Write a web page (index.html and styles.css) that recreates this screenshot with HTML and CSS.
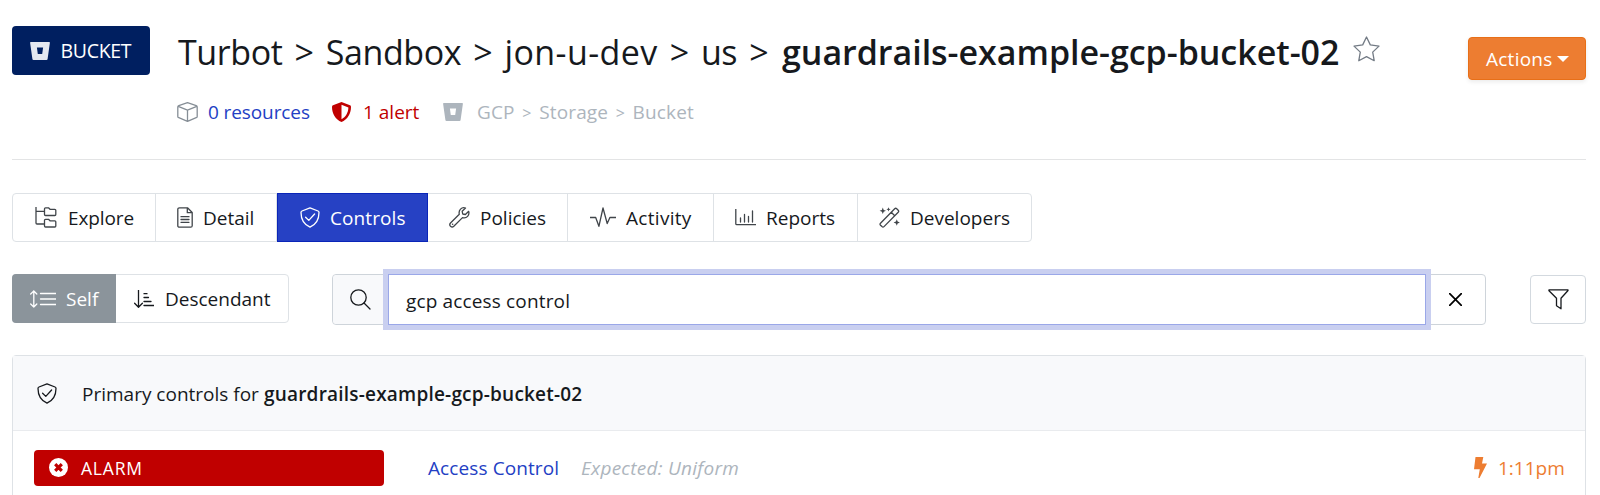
FILE: index.html
```html
<!DOCTYPE html>
<html lang="en">
<head>
<meta charset="utf-8">
<title>guardrails-example-gcp-bucket-02</title>
<link rel="stylesheet" href="styles.css">
</head>
<body>
<svg class="defs" width="0" height="0">
  <symbol id="bucket" viewBox="0 0 20 18"><path fill-rule="evenodd" d="M.8 0h18.400q.8 0 .7.8L17.600 17q-.1 1-1.100 1h-13q-1 0-1.100-1L.1.800Q0 0 .8 0zM6.900 5.500l.9 6.500h4.400l.9-6.500z"/></symbol>
  <symbol id="shield-check" viewBox="0 0 20 21"><path class="line" d="M10 .8 18 4q1 .4 1 1.500c0 6.500-3 12-9 14.700C4 17.500 1 12 1 5.500Q1 4.400 2 4zM5.600 10.200l3.200 3.200 5.800-6.400"/></symbol>
</svg>
<main class="page">
  <header class="header">
    <div class="badge"><svg class="badge-icon" width="20" height="18"><use href="#bucket"/></svg><span class="badge-text">BUCKET</span></div>
    <div class="heading">
      <h1 class="title"><span class="crumbs">Turbot &gt; Sandbox &gt; <span class="folder">jon-u-dev</span> &gt; us &gt;</span><strong class="current">guardrails-example-gcp-bucket-02</strong>
        <svg class="star" width="27" height="26" viewBox="0 0 27 26"><path class="line" d="M13.500 1l3.800 7.900 8.700 1.200-6.300 6 1.500 8.600-7.700-4.100-7.700 4.100 1.500-8.600-6.300-6 8.700-1.200z"/></svg></h1>
      <div class="meta">
        <svg class="cube" width="21" height="20" viewBox="0 0 21 20"><path class="line" d="M10.500.7 19.200 3.600q1 .4 1 1.300v9.500q0 1-1 1.300l-8.700 3.600-8.700-3.600q-1-.4-1-1.300V4.900q0-.9 1-1.300zM1.200 4.400l9.300 3.700 9.300-3.700M10.500 8.100v11"/></svg>
        <a class="resources">0 resources</a>
        <svg class="alert-icon" width="19" height="20" viewBox="0 0 19 20"><path fill-rule="evenodd" d="M9.500 0 18 3.300q1 .4 1 1.600c0 6.500-3.500 12.600-9.500 15.100C3.500 17.500 0 11.400 0 4.900Q0 3.700 1 3.300zm0 2.700v14.500c4.200-2 6.800-6.700 6.900-11.700z"/></svg>
        <a class="alerts">1 alert</a>
        <svg class="type-icon" width="20" height="18"><use href="#bucket"/></svg>
        <span class="type">GCP <small>&gt;</small> Storage <small>&gt;</small> Bucket</span>
      </div>
    </div>
    <button class="actions"><span class="actions-text">Actions</span><i class="caret"></i></button>
  </header>

  <nav class="tabs">
    <a class="tab t-explore"><svg width="22" height="21" viewBox="0 0 22 21"><path class="line" d="M1 0v16q0 1 1 1h7M1 4.300h8M10.500.8h3l1.500 1.500h4.800q1 0 1 1v4.200q0 1-1 1h-9.300q-1 0-1-1V1.800q0-1 1-1zM10.500 12.300h3l1.500 1.500h4.800q1 0 1 1V19q0 1-1 1h-9.300q-1 0-1-1v-5.700q0-1 1-1z"/></svg><span>Explore</span></a>
    <a class="tab t-detail"><svg width="16" height="21" viewBox="0 0 16 21"><path class="line" d="M2.500.8h8L15.200 5.500v13.200q0 1.500-1.500 1.500H2.500Q.8 20.200.8 18.700V2.300Q.8.800 2.500.800zM10.300 1v4.700H15M4 9.700h8M4 12.500h8M4 15.300h8"/></svg><span>Detail</span></a>
    <a class="tab t-controls active"><svg width="20" height="21"><use href="#shield-check"/></svg><span>Controls</span></a>
    <a class="tab t-policies"><svg width="21" height="21" viewBox="0 0 21 21"><path class="line" d="M19.700 4.300 16.400 7.500l-2.700-.5-.5-2.700L16.500 1C12.500-.2 9.300 3 10.300 7.300L1.500 16q-1.500 1.700 0 3.300 1.700 1.500 3.300 0l8.700-8.700c4.300 1 7.300-2.200 6.200-6.300z"/><circle cx="3.600" cy="17.300" r=".8"/></svg><span>Policies</span></a>
    <a class="tab t-activity"><svg width="26" height="21" viewBox="0 0 26 21"><path class="line" d="M0 10.500h5.700l3.200 8.800L13 1l4.200 15.500 2.700-6H26"/></svg><span>Activity</span></a>
    <a class="tab t-reports"><svg width="21" height="17" viewBox="0 0 21 17"><path class="line" d="M.8 0v14.700q0 1 1 1H21M5.500 9v4M9.500 5.500V13M13.500 7.500V13M17.500 2v11"/></svg><span>Reports</span></a>
    <a class="tab t-developers"><svg width="21" height="21" viewBox="0 0 21 21"><path class="line" d="M1.500 16.300 15.700 1.700q1-1 2 0l1.500 1.500q1 1 0 2L5 19.600q-1 1-2 0l-1.500-1.400q-1-.9 0-1.900zM12.300 5.300l3.400 3.400"/><path d="m3.800.6.9 2.300 2.300.9-2.300.9-.9 2.300-.9-2.300L.6 3.800l2.300-.9zM9.500.2l.6 1.500 1.500.6-1.500.6-.6 1.500-.6-1.500-1.500-.6 1.500-.6zM17.800 12.300l.8 2.300 2.300.9-2.300.9-.8 2.300-.9-2.300-2.300-.9 2.300-.9z"/></svg><span>Developers</span></a>
  </nav>

  <section class="toolbar">
    <div class="scope">
      <a class="self"><svg width="26" height="18" viewBox="0 0 26 18"><path class="line" d="M3.800 1v16M.7 4 3.800 1l3 3M.7 14l3.100 3 3-3M10.500 3.500H26M10.500 9H26M10.500 14.500H26"/></svg><span>Self</span></a>
      <a class="descendant"><svg width="20" height="18" viewBox="0 0 20 18"><path class="line" d="M4.500 0v17M.6 13.300l3.900 3.900 3.900-3.900M10 3.700h3M10 7.500h4.500M10 11.500h7M10 15.500h10"/></svg><span>Descendant</span></a>
    </div>
    <div class="search">
      <div class="search-icon"><svg width="21" height="21" viewBox="0 0 21 21"><circle class="line" cx="8.500" cy="8.500" r="7.700"/><path class="line" d="m14 14 6 6"/></svg></div>
      <div class="search-input"><span class="query">gcp access control</span></div>
      <div class="clear"><svg width="13" height="13" viewBox="0 0 13 13"><path class="line" d="m.7.700 11.600 11.600M12.300.7.7 12.300"/></svg></div>
    </div>
    <div class="filter"><svg width="21" height="21" viewBox="0 0 21 21"><path class="line" d="M1.200.8h18.600q.5.400 0 1L13 9.300v10.500l-4.500-3V9.300L1 1.800q-.3-.6.200-1z"/></svg></div>
  </section>

  <section class="card">
    <div class="card-head"><svg width="20" height="21"><use href="#shield-check"/></svg><p class="card-title"><span class="primary">Primary controls for</span><strong>guardrails-example-gcp-bucket-02</strong></p></div>
    <div class="row">
      <div class="alarm"><svg width="19" height="19" viewBox="0 0 19 19"><circle class="disc" cx="9.500" cy="9.500" r="9.500"/><path class="cross" d="m6.200 6.200 6.600 6.600m0-6.600-6.600 6.600"/></svg><span>ALARM</span></div>
      <a class="control">Access Control</a>
      <em class="expected">Expected: Uniform</em>
      <div class="time"><svg width="13" height="21" viewBox="0 0 13 21"><path d="M1.500 0h7.800L8 6.500h5L5.500 21H4.300l1.500-8.700H0z"/></svg><span>1:11pm</span></div>
    </div>
  </section>
</main>
</body>
</html>
```
FILE: styles.css
```css
* { box-sizing: border-box; }
body { margin: 0; background: #fff; color: #16191d; font: 19px/28px "Open Sans", "Noto Sans", sans-serif; height: 495px; overflow: hidden; }
.defs { position: absolute; }
svg { flex: none; fill: currentColor; }
.line { fill: none; stroke: currentColor; stroke-width: 1.3; stroke-linejoin: round; stroke-linecap: round; }
span, a, strong, em { white-space: nowrap; }
.page { width: 1574px; margin-left: 12px; }

.header { display: flex; align-items: flex-start; height: 160px; padding-top: 26px; border-bottom: 1px solid #e3e4e5; }
.badge { display: flex; align-items: center; width: 138px; height: 49px; padding-left: 18px; border-radius: 4px; background: #001f60; color: #fff; }
.badge-icon { color: #e4e8f0; }
.badge-text { margin-left: 10.500px; font-size: 19.500px; letter-spacing: -.3px; }
.heading { flex: 1; padding-left: 28px; }
.title { display: flex; margin: 0; height: 49px; font-size: 34px; line-height: 53px; font-weight: 400; color: #16191d; }
.crumbs { width: 604px; letter-spacing: -.4px; word-spacing: 3.700px; }
.folder { letter-spacing: .4px; }
.current { width: 571px; font-weight: 600; letter-spacing: -.03px; }
.star { margin-top: 10px; color: #737b85; }
.meta { display: flex; align-items: center; height: 28px; margin-top: 23px; }
.cube { margin-left: -1px; color: #868e96; }
.resources { width: 112px; margin-left: 10px; color: #2340c4; letter-spacing: -.1px; }
.alert-icon { margin-left: 12px; }
.alert-icon, .alerts { color: #c00000; }
.alerts { width: 67px; margin-left: 12px; }
.type-icon { margin-left: 13px; }
.type-icon, .type { color: #adb5bd; }
.type { margin-left: 14px; letter-spacing: .15px; word-spacing: 2.500px; }
.type small { font-size: 16px; }
.actions { display: flex; align-items: center; width: 118px; height: 43px; margin-top: 11px; padding: 0 0 0 17px; border: 1px solid #e86f17; border-radius: 4px; background: #ed7d31; color: #fff; font: inherit; box-shadow: 0 2px 4px rgba(0,0,0,.08); }
.actions-text { width: 71px; text-align: left; letter-spacing: .25px; }
.caret { border: 6px solid transparent; border-top-color: #fff; border-bottom: 0; }

.tabs { display: flex; width: 1020px; height: 49px; margin-top: 33px; border: 1px solid #dee2e6; border-radius: 4px; }
.tab { display: flex; align-items: center; border-right: 1px solid #dee2e6; }
.tab svg { color: #40454a; }
.tab:last-child { border-right: 0; }
.t-explore { width: 143px; padding-left: 22px; }
.t-explore span { margin-left: 11px; letter-spacing: -.1px; }
.t-detail { width: 121px; padding-left: 21px; }
.t-detail span { margin-left: 10px; }
.t-controls { width: 151px; padding-left: 22px; }
.t-controls span { margin-left: 10px; letter-spacing: .1px; }
.tab.active { margin: -1px 0; border: 1px solid #0a25b8; background: #2641c4; color: #fff; }
.tab.active svg { color: #fff; }
.t-policies { width: 140px; padding-left: 21px; }
.t-policies span { margin-left: 10px; }
.t-activity { width: 146px; padding-left: 22px; }
.t-activity span { margin-left: 10px; letter-spacing: .3px; }
.t-reports { width: 144px; padding-left: 21px; }
.t-reports span { margin-left: 10px; }
.t-developers { padding-left: 21px; }
.t-developers span { margin-left: 10px; }

.toolbar { display: flex; margin-top: 32px; height: 51px; }
.scope { display: flex; width: 277px; height: 49px; border: 1px solid #dee2e6; border-radius: 4px; }
.self, .descendant { display: flex; align-items: center; }
.self { width: 104px; margin: -1px 0 -1px -1px; padding-left: 18px; border-radius: 4px 0 0 4px; background: #8b949b; color: #fff; }
.self span { margin-left: 10px; }
.descendant { padding-left: 18px; }
.descendant span { margin-left: 11px; }
.search { display: flex; width: 1154px; height: 51px; margin-left: 43px; border: 1px solid #ced4da; border-radius: 4px; }
.search-icon { display: flex; align-items: center; width: 55px; padding: 0 0 0 17px; background: #f8f9fb; border-radius: 4px 0 0 4px; }
.search-input { display: flex; align-items: center; width: 1038px; margin: -1px 0; padding-left: 17px; border: 1px solid #9aa7e8; background: #fff; box-shadow: 0 0 0 5px #c9cff0; }
.query { line-height: 24px; padding-top: 2px; letter-spacing: .15px; }
.clear { display: flex; align-items: center; padding-left: 23px; color: #000; }
.clear .line { stroke-width: 1.700; }
.filter { display: flex; align-items: center; justify-content: center; width: 56px; height: 49px; margin: 1px 0 0 44px; border: 1px solid #d3d9df; border-radius: 4px; }

.card { height: 160px; margin-top: 30px; border: 1px solid #dee2e6; border-radius: 4px; }
.card-head { display: flex; align-items: center; height: 75px; padding: 1px 0 0 24px; background: #f8f9fb; border-bottom: 1px solid #e9ebee; }
.card-title { display: flex; margin: 1px 0 0 25px; }
.primary { width: 182px; }
.card-title strong { font-weight: 600; letter-spacing: .2px; }
.row { display: flex; align-items: center; height: 73px; padding-left: 21px; }
.alarm { display: flex; align-items: center; width: 350px; height: 36px; padding-left: 15px; border-radius: 4px; background: #c00000; color: #fff; font-size: 17.500px; font-weight: 500; }
.alarm span { margin-left: 13px; letter-spacing: .8px; }
.disc { fill: #fff; }
.cross { stroke: #c00000; stroke-width: 3.200; fill: none; }
.control { width: 153px; margin-left: 44px; color: #2340c4; letter-spacing: .1px; }
.expected { color: #adb5bd; letter-spacing: .25px; }
.time { display: flex; align-items: center; margin-left: auto; padding-right: 22px; color: #ed7d31; }
.time span { width: 65px; margin-left: 11px; }
```
